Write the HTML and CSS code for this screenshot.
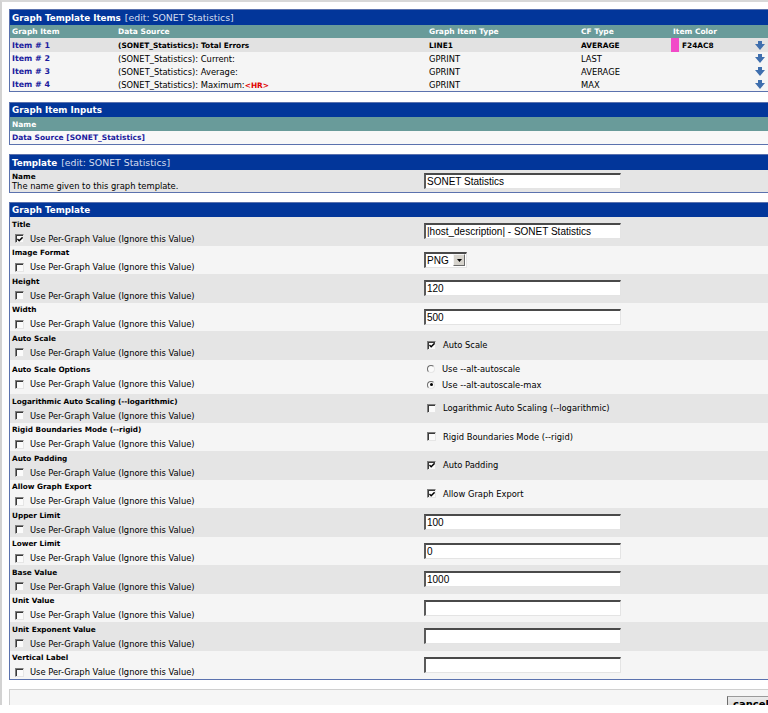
FILE: index.html
```html
<!DOCTYPE html>
<html lang="en">
<head>
<meta charset="utf-8">
<title>Graph Template</title>
<link rel="stylesheet" href="styles.css">
</head>
<body>
<div class="page">

  <section class="box">
    <div class="hdr"><b>Graph Template Items</b><span class="hdr-sub">[edit: SONET Statistics]</span></div>
    <div class="grid colhdr"><span>Graph Item</span><span>Data Source</span><span>Graph Item Type</span><span>CF Type</span><span class="c5">Item Color</span><span></span></div>
    <div class="grid irow first strong"><a class="lnk">Item # 1</a><span>(SONET_Statistics): Total Errors</span><span>LINE1</span><span>AVERAGE</span><span class="color"><i class="swatch"></i>F24AC8</span><span class="arrow"><svg width="10" height="9" viewBox="0 0 10 9"><polygon points="3,0 7,0 7,3 10,3 5,9 0,3 3,3" fill="#3f6fae"/></svg></span></div>
    <div class="grid irow"><a class="lnk">Item # 2</a><span>(SONET_Statistics): Current:</span><span>GPRINT</span><span>LAST</span><span></span><span class="arrow"><svg width="10" height="9" viewBox="0 0 10 9"><polygon points="3,0 7,0 7,3 10,3 5,9 0,3 3,3" fill="#3f6fae"/></svg></span></div>
    <div class="grid irow"><a class="lnk">Item # 3</a><span>(SONET_Statistics): Average:</span><span>GPRINT</span><span>AVERAGE</span><span></span><span class="arrow"><svg width="10" height="9" viewBox="0 0 10 9"><polygon points="3,0 7,0 7,3 10,3 5,9 0,3 3,3" fill="#3f6fae"/></svg></span></div>
    <div class="grid irow"><a class="lnk">Item # 4</a><span>(SONET_Statistics): Maximum:<b class="red">&lt;HR&gt;</b></span><span>GPRINT</span><span>MAX</span><span></span><span class="arrow"><svg width="10" height="9" viewBox="0 0 10 9"><polygon points="3,0 7,0 7,3 10,3 5,9 0,3 3,3" fill="#3f6fae"/></svg></span></div>
  </section>

  <section class="box">
    <div class="hdr hdr-short"><b>Graph Item Inputs</b></div>
    <div class="colhdr single"><span>Name</span></div>
    <div class="inrow"><a class="lnk">Data Source [SONET_Statistics]</a></div>
  </section>

  <section class="box">
    <div class="hdr"><b>Template</b><span class="hdr-sub">[edit: SONET Statistics]</span></div>
    <div class="namerow">
      <div class="nl"><div class="name">Name</div><div class="desc">The name given to this graph template.</div></div>
      <div class="tr"><input class="txt" type="text" value="SONET Statistics"></div>
    </div>
  </section>

  <section class="box">
    <div class="hdr hdr-short"><b>Graph Template</b></div>

    <div class="trow a">
      <div class="tl"><div class="name">Title</div><div class="use"><span class="cb on"><svg width="7" height="7" viewBox="0 0 7 7"><polyline points="0.5,3 2.5,5 6.5,1" fill="none" stroke="#000" stroke-width="1.6"/></svg></span>Use Per-Graph Value (Ignore this Value)</div></div>
      <div class="tr"><input class="txt" type="text" value="|host_description| - SONET Statistics"></div>
    </div>
    <div class="trow b">
      <div class="tl"><div class="name">Image Format</div><div class="use"><span class="cb"></span>Use Per-Graph Value (Ignore this Value)</div></div>
      <div class="tr"><div class="sel"><span class="sel-val">PNG</span><span class="sel-btn"><svg width="5" height="3" viewBox="0 0 5 3"><polygon points="0,0 5,0 2.5,3" fill="#000"/></svg></span></div></div>
    </div>
    <div class="trow a">
      <div class="tl"><div class="name">Height</div><div class="use"><span class="cb"></span>Use Per-Graph Value (Ignore this Value)</div></div>
      <div class="tr"><input class="txt" type="text" value="120"></div>
    </div>
    <div class="trow b">
      <div class="tl"><div class="name">Width</div><div class="use"><span class="cb"></span>Use Per-Graph Value (Ignore this Value)</div></div>
      <div class="tr"><input class="txt" type="text" value="500"></div>
    </div>
    <div class="trow a">
      <div class="tl"><div class="name">Auto Scale</div><div class="use"><span class="cb"></span>Use Per-Graph Value (Ignore this Value)</div></div>
      <div class="tr"><div class="opt"><span class="cb on"><svg width="7" height="7" viewBox="0 0 7 7"><polyline points="0.5,3 2.5,5 6.5,1" fill="none" stroke="#000" stroke-width="1.6"/></svg></span>Auto Scale</div></div>
    </div>
    <div class="trow b tall">
      <div class="tl"><div class="name">Auto Scale Options</div><div class="use"><span class="cb"></span>Use Per-Graph Value (Ignore this Value)</div></div>
      <div class="tr col">
        <div class="opt radio-line"><span class="rb"></span>Use --alt-autoscale</div>
        <div class="opt radio-line"><span class="rb on"></span>Use --alt-autoscale-max</div>
      </div>
    </div>
    <div class="trow a">
      <div class="tl"><div class="name">Logarithmic Auto Scaling (--logarithmic)</div><div class="use"><span class="cb"></span>Use Per-Graph Value (Ignore this Value)</div></div>
      <div class="tr"><div class="opt"><span class="cb"></span>Logarithmic Auto Scaling (--logarithmic)</div></div>
    </div>
    <div class="trow b">
      <div class="tl"><div class="name">Rigid Boundaries Mode (--rigid)</div><div class="use"><span class="cb"></span>Use Per-Graph Value (Ignore this Value)</div></div>
      <div class="tr"><div class="opt"><span class="cb"></span>Rigid Boundaries Mode (--rigid)</div></div>
    </div>
    <div class="trow a">
      <div class="tl"><div class="name">Auto Padding</div><div class="use"><span class="cb"></span>Use Per-Graph Value (Ignore this Value)</div></div>
      <div class="tr"><div class="opt"><span class="cb on"><svg width="7" height="7" viewBox="0 0 7 7"><polyline points="0.5,3 2.5,5 6.5,1" fill="none" stroke="#000" stroke-width="1.6"/></svg></span>Auto Padding</div></div>
    </div>
    <div class="trow b">
      <div class="tl"><div class="name">Allow Graph Export</div><div class="use"><span class="cb"></span>Use Per-Graph Value (Ignore this Value)</div></div>
      <div class="tr"><div class="opt"><span class="cb on"><svg width="7" height="7" viewBox="0 0 7 7"><polyline points="0.5,3 2.5,5 6.5,1" fill="none" stroke="#000" stroke-width="1.6"/></svg></span>Allow Graph Export</div></div>
    </div>
    <div class="trow a">
      <div class="tl"><div class="name">Upper Limit</div><div class="use"><span class="cb"></span>Use Per-Graph Value (Ignore this Value)</div></div>
      <div class="tr"><input class="txt" type="text" value="100"></div>
    </div>
    <div class="trow b">
      <div class="tl"><div class="name">Lower Limit</div><div class="use"><span class="cb"></span>Use Per-Graph Value (Ignore this Value)</div></div>
      <div class="tr"><input class="txt" type="text" value="0"></div>
    </div>
    <div class="trow a">
      <div class="tl"><div class="name">Base Value</div><div class="use"><span class="cb"></span>Use Per-Graph Value (Ignore this Value)</div></div>
      <div class="tr"><input class="txt" type="text" value="1000"></div>
    </div>
    <div class="trow b">
      <div class="tl"><div class="name">Unit Value</div><div class="use"><span class="cb"></span>Use Per-Graph Value (Ignore this Value)</div></div>
      <div class="tr"><input class="txt" type="text" value=""></div>
    </div>
    <div class="trow a">
      <div class="tl"><div class="name">Unit Exponent Value</div><div class="use"><span class="cb"></span>Use Per-Graph Value (Ignore this Value)</div></div>
      <div class="tr"><input class="txt" type="text" value=""></div>
    </div>
    <div class="trow b">
      <div class="tl"><div class="name">Vertical Label</div><div class="use"><span class="cb"></span>Use Per-Graph Value (Ignore this Value)</div></div>
      <div class="tr"><input class="txt" type="text" value=""></div>
    </div>
  </section>

  <div class="bar"><button class="btn" type="button">cancel</button></div>
</div>
</body>
</html>
```
FILE: styles.css
```css
html, body {
  margin: 0;
  padding: 0;
  overflow: hidden;
  background: #ffffff;
}
body {
  font-family: "DejaVu Sans", Verdana, sans-serif;
  font-size: 8.35px;
  color: #000;
}
.page {
  box-sizing: border-box;
  width: 800px;
  height: 705px;
  overflow: hidden;
  border-top: 2px solid #d8d8d8;
  border-left: 2px solid #d2d2d2;
  padding: 7px 0 0 7px;
}
.box {
  box-sizing: border-box;
  width: 766px;
  border: 1px solid #5b72ae;
  margin-bottom: 9px;
  background: #f5f5f5;
}
.box:first-child { margin-bottom: 10px; }
.hdr {
  height: 15px;
  display: flex;
  align-items: center;
  padding-left: 2px;
  background: #02369a;
  color: #fff;
  white-space: nowrap;
  font-size: 8.75px;
}
.hdr-short { height: 14px; }
.hdr b { font-weight: bold; }
.hdr-sub {
  margin-left: 4px;
  font-size: 9.35px;
  color: #d6def0;
}
.grid {
  display: grid;
  grid-template-columns: 106px 311px 152px 92px 79px 1fr;
  align-items: center;
  white-space: nowrap;
}
.grid > * { padding-left: 2px; }
.grid > .color, .grid > .arrow { padding-left: 0; }
.colhdr {
  height: 13px;
  background: #699b9a;
  color: #fff;
  font-weight: bold;
  font-size: 7.5px;
}
.colhdr.single {
  height: 14px;
  display: flex;
  align-items: center;
  padding-left: 2px;
}
.irow {
  height: 13px;
  background: #f5f5f5;
}
.irow.first {
  height: 14px;
  background: #e2e2e2;
}
.irow.strong span { font-weight: bold; font-size: 7.4px; }
.lnk {
  color: #1b1b9e;
  font-weight: bold;
  font-size: 7.9px;
  text-decoration: none;
}
.red { color: #e00000; font-size: 7.4px; }
.color {
  display: flex;
  align-items: center;
  height: 100%;
}
.swatch {
  display: block;
  width: 8px;
  height: 100%;
  background: #f24ac8;
  margin-right: 3px;
}
.arrow {
  display: flex;
  align-items: center;
  padding-left: 5px !important;
}
.inrow {
  height: 13px;
  display: flex;
  align-items: center;
  padding-left: 2px;
  background: #f8f8f8;
}
.inrow .lnk { font-size: 7.5px; }

.namerow {
  display: flex;
  height: 22px;
  background: #e5e5e5;
}
.nl {
  box-sizing: border-box;
  width: 414px;
  padding: 2px 0 0 2px;
}
.name {
  font-weight: bold;
  font-size: 7.3px;
  line-height: 10px;
  white-space: nowrap;
}
.desc { line-height: 9px; }

.trow {
  display: flex;
  height: 28.5px;
}
.trow.tall { height: 34.5px; }
.trow.a { background: #e5e5e5; }
.trow.b { background: #f5f5f5; }
.tl {
  box-sizing: border-box;
  width: 414px;
  padding: 2px 0 0 2px;
  display: flex;
  flex-direction: column;
  justify-content: center;
}
.use {
  display: flex;
  align-items: center;
  height: 12px;
  margin-top: 3px;
  padding-left: 3px;
  white-space: nowrap;
}
.use .cb { margin-right: 6px; }
.tr {
  flex: 1;
  display: flex;
  align-items: center;
}
.tr.col {
  flex-direction: column;
  align-items: flex-start;
  justify-content: center;
}
.opt {
  display: flex;
  align-items: center;
  padding-left: 3px;
  white-space: nowrap;
}
.opt .cb, .opt .rb { margin-right: 7px; }
.radio-line { height: 16px; }

.cb {
  box-sizing: border-box;
  width: 9px;
  height: 9px;
  flex: none;
  display: flex;
  align-items: center;
  justify-content: center;
  background: #fbfbfb;
  border-style: solid;
  border-width: 1px;
  border-color: #7d7d7d #e6e6e6 #e6e6e6 #7d7d7d;
  box-shadow: inset 1px 1px 0 #3a3a3a;
}
.cb svg { margin: 1px 0 0 1px; }
.rb {
  box-sizing: border-box;
  width: 8px;
  height: 8px;
  flex: none;
  border-radius: 50%;
  background: #fbfbfb;
  border: 1px solid;
  border-color: #6d6d6d #e6e6e6 #e6e6e6 #6d6d6d;
  position: relative;
}
.rb.on::after {
  content: "";
  position: absolute;
  left: 1.5px;
  top: 1.5px;
  width: 3px;
  height: 3px;
  border-radius: 50%;
  background: #000;
}

.txt {
  box-sizing: border-box;
  width: 197px;
  height: 16px;
  margin: 0;
  padding: 0 1px;
  border-style: solid;
  border-width: 2px 1px 1px 2px;
  border-color: #4a4a4a #e4e4e4 #e4e4e4 #5a5a5a;
  background: #fff;
  font-family: "Liberation Sans", Arial, sans-serif;
  font-size: 10px;
  color: #000;
  outline: none;
}
.sel {
  box-sizing: border-box;
  width: 43px;
  height: 16px;
  display: flex;
  align-items: center;
  background: #fff;
  border-style: solid;
  border-width: 2px 1px 1px 2px;
  border-color: #4a4a4a #e4e4e4 #e4e4e4 #5a5a5a;
  font-family: "Liberation Sans", Arial, sans-serif;
  font-size: 10px;
}
.sel-val { flex: 1; padding-left: 1px; }
.sel-btn {
  box-sizing: border-box;
  width: 12px;
  height: 12px;
  margin-right: 1px;
  display: flex;
  align-items: center;
  justify-content: center;
  background: #d6d3cc;
  border: 1px solid;
  border-color: #f4f4f4 #6a6a6a #6a6a6a #f4f4f4;
}

.bar {
  box-sizing: border-box;
  width: 766px;
  height: 24px;
  margin-top: 9px;
  padding-left: 717px;
  background: #f6f6f6;
  border: 1px solid #d0d0d0;
  overflow: hidden;
}
.btn {
  display: block;
  margin: 6px 0 0 0;
  padding: 0 0 0 5px;
  width: 60px;
  height: 16px;
  text-align: left;
  font-family: "DejaVu Sans", Verdana, sans-serif;
  font-weight: bold;
  font-size: 10px;
  line-height: 9px;
  color: #000;
  background: linear-gradient(#ececec, #d2d2d2);
  border: 1px solid;
  border-color: #9a9a9a #9a9a9a #9a9a9a #6d6d6d;
}
```
